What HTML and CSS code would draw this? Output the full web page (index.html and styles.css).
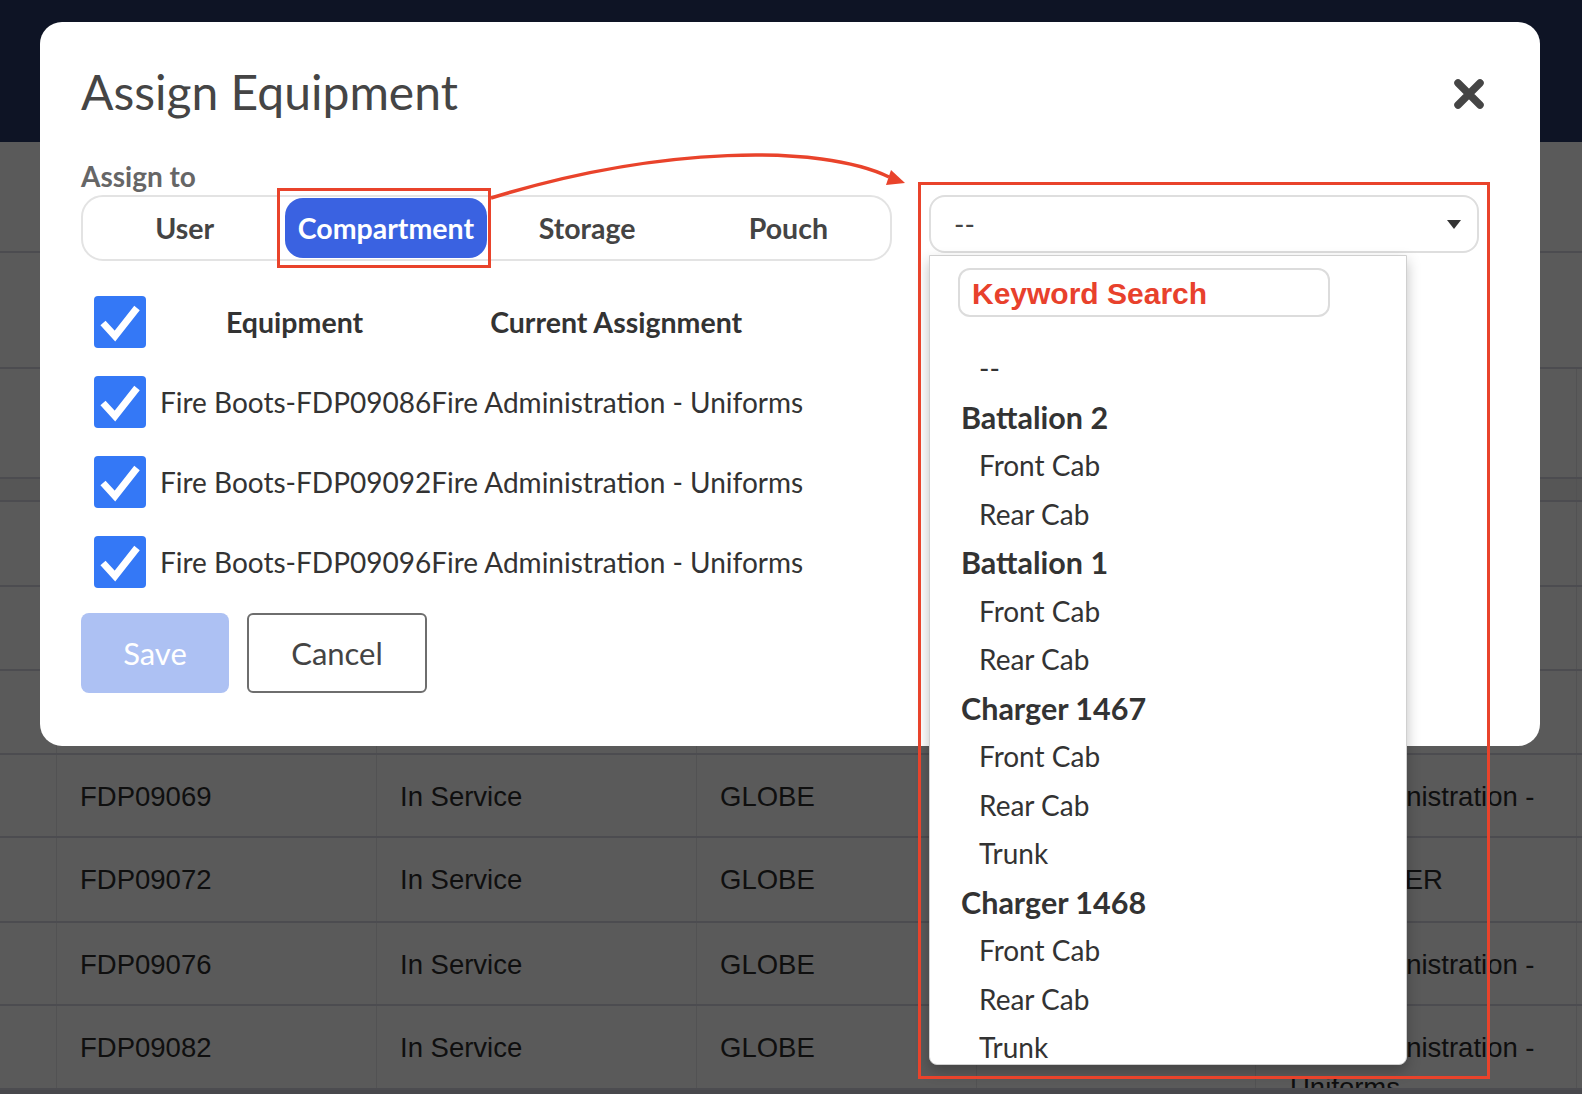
FILE: index.html
```html
<!DOCTYPE html>
<html lang="en">
<head>
<meta charset="utf-8">
<title>Assign Equipment</title>
<link rel="stylesheet" href="styles.css">
</head>
<body>
<div class="page">
  <header class="topbar"></header>
  <div class="band band-a"></div>
  <div class="band band-b"></div>
  <div class="trow h110"><div class="cell"></div><div class="cell"></div><div class="cell"></div><div class="cell"></div><div class="cell"></div><div class="cell"></div><div class="cell"></div></div>
  <div class="trow h23 shade"><div class="cell"></div><div class="cell"></div><div class="cell"></div><div class="cell"></div><div class="cell"></div><div class="cell"></div><div class="cell"></div></div>
  <div class="trow h85"><div class="cell"></div><div class="cell"></div><div class="cell"></div><div class="cell"></div><div class="cell"></div><div class="cell"></div><div class="cell"></div></div>
  <div class="trow h84"><div class="cell"></div><div class="cell"></div><div class="cell"></div><div class="cell"></div><div class="cell"></div><div class="cell"></div><div class="cell"></div></div>
  <div class="trow h84"><div class="cell"></div><div class="cell"></div><div class="cell"></div><div class="cell"></div><div class="cell"></div><div class="cell"></div><div class="cell"></div></div>
  <div class="trow h83"><div class="cell"></div><div class="cell">FDP09069</div><div class="cell">In Service</div><div class="cell">GLOBE</div><div class="cell"></div><div class="cell wide">Fire Administration - Uniforms</div><div class="cell"></div></div>
  <div class="trow h85"><div class="cell"></div><div class="cell">FDP09072</div><div class="cell">In Service</div><div class="cell">GLOBE</div><div class="cell"></div><div class="cell wide caps">CONTAINER</div><div class="cell"></div></div>
  <div class="trow h83"><div class="cell"></div><div class="cell">FDP09076</div><div class="cell">In Service</div><div class="cell">GLOBE</div><div class="cell"></div><div class="cell wide">Fire Administration - Uniforms</div><div class="cell"></div></div>
  <div class="trow h84"><div class="cell"></div><div class="cell">FDP09082</div><div class="cell">In Service</div><div class="cell">GLOBE</div><div class="cell"></div><div class="cell wide">Fire Administration - Uniforms</div><div class="cell"></div></div>
  <footer class="footbar"></footer>
</div>

<div class="modal" role="dialog" aria-label="Assign Equipment">
  <div class="modal-head">
    <h1 class="modal-title">Assign Equipment</h1>
    <button class="close-btn" aria-label="Close">
      <svg width="32" height="32" viewBox="0 0 32 32"><path d="M5 5 L27 27 M27 5 L5 27" stroke="#454545" stroke-width="7.5" stroke-linecap="round" fill="none"/></svg>
    </button>
  </div>
  <div class="modal-body">
    <div class="assign-col">
      <div class="field-label">Assign to</div>
      <div class="seg">
        <div class="seg-item">User</div>
        <div class="seg-item active">Compartment</div>
        <div class="seg-item">Storage</div>
        <div class="seg-item">Pouch</div>
      </div>
      <div class="equip-list">
        <div class="equip-row">
          <span class="cbox"><svg width="52" height="52" viewBox="0 0 52 52"><polyline points="9,27 21,40 43,12" fill="none" stroke="#fff" stroke-width="7"/></svg></span>
          <span class="th th-equip">Equipment</span>
          <span class="th th-assign">Current Assignment</span>
        </div>
        <div class="equip-row">
          <span class="cbox"><svg width="52" height="52" viewBox="0 0 52 52"><polyline points="9,27 21,40 43,12" fill="none" stroke="#fff" stroke-width="7"/></svg></span>
          <span class="equip-text">Fire Boots-FDP09086Fire Administration - Uniforms</span>
        </div>
        <div class="equip-row">
          <span class="cbox"><svg width="52" height="52" viewBox="0 0 52 52"><polyline points="9,27 21,40 43,12" fill="none" stroke="#fff" stroke-width="7"/></svg></span>
          <span class="equip-text">Fire Boots-FDP09092Fire Administration - Uniforms</span>
        </div>
        <div class="equip-row">
          <span class="cbox"><svg width="52" height="52" viewBox="0 0 52 52"><polyline points="9,27 21,40 43,12" fill="none" stroke="#fff" stroke-width="7"/></svg></span>
          <span class="equip-text">Fire Boots-FDP09096Fire Administration - Uniforms</span>
        </div>
      </div>
      <div class="actions">
        <button class="btn btn-save">Save</button>
        <button class="btn btn-cancel">Cancel</button>
      </div>
    </div>
    <div class="target-col">
      <div class="select"><span>--</span><span class="caret"></span></div>
      <div class="dropdown">
        <input class="kw" type="text" placeholder="Keyword Search">
        <ul class="opts">
          <li class="opt">--</li>
          <li class="grp">Battalion 2</li>
          <li class="opt">Front Cab</li>
          <li class="opt">Rear Cab</li>
          <li class="grp">Battalion 1</li>
          <li class="opt">Front Cab</li>
          <li class="opt">Rear Cab</li>
          <li class="grp">Charger 1467</li>
          <li class="opt">Front Cab</li>
          <li class="opt">Rear Cab</li>
          <li class="opt">Trunk</li>
          <li class="grp">Charger 1468</li>
          <li class="opt">Front Cab</li>
          <li class="opt">Rear Cab</li>
          <li class="opt">Trunk</li>
        </ul>
      </div>
    </div>
  </div>
</div>

<div class="anno anno-comp"></div>
<div class="anno anno-drop"></div>
<svg class="anno-arrow" width="1582" height="300" viewBox="0 0 1582 300">
  <path d="M491 198 C 660 146 820 144 889 177" fill="none" stroke="#e9432b" stroke-width="3.5"/>
  <polygon points="905,183 891,170 886,185" fill="#e9432b"/>
</svg>
</body>
</html>
```

FILE: styles.css
```css
* { box-sizing: border-box; }

body {
  margin: 0;
  width: 1582px;
  height: 1094px;
  overflow: hidden;
  position: relative;
  background: #5a5a5a;
  font-family: Lato, "Open Sans", sans-serif;
}

/* ---------- background page (dimmed) ---------- */
.page {
  display: flex;
  flex-direction: column;
  height: 1094px;
}
.topbar {
  height: 142px;
  flex: none;
  background: #0e1425;
}
.band {
  flex: none;
  background: #5a5a5a;
  border-bottom: 2px solid #4c4c50;
}
.band-a { height: 111px; }
.band-b { height: 116px; }

.trow {
  flex: none;
  display: grid;
  grid-template-columns: 57px 320px 320px 280px 279px 321px 1fr;
  border-bottom: 2px solid #4c4c50;
  background: #5a5a5a;
  overflow: hidden;
}
.trow.shade { background: #565656; }
.h110 { height: 110px; }
.h23 { height: 23px; }
.h85 { height: 85px; }
.h84 { height: 84px; }
.h83 { height: 83px; }

.cell {
  border-right: 1px solid #525253;
  padding: 22px 20px 0 23px;
  font-family: "Liberation Sans", Arial, sans-serif;
  font-size: 27.5px;
  line-height: 40px;
  color: #0f0f0f;
}
.cell:first-child { padding-left: 0; }
.cell.wide { padding-left: 34px; padding-right: 8px; }
.cell.wide.caps { padding-left: 27px; }

.footbar {
  flex: 1;
  background: #48484c;
}

/* ---------- modal ---------- */
.modal {
  position: absolute;
  left: 40px;
  top: 22px;
  width: 1500px;
  height: 724px;
  background: #fff;
  border-radius: 22px;
  padding: 41px 55px 0 41px;
}
.modal-head {
  display: flex;
  align-items: center;
  justify-content: space-between;
  height: 58px;
}
.modal-title {
  margin: 0;
  font-size: 48px;
  font-weight: 400;
  line-height: 58px;
  color: #454545;
}
.close-btn {
  border: 0;
  background: none;
  padding: 0;
  width: 32px;
  height: 32px;
  margin-top: 3px;
  display: block;
}
.close-btn svg { display: block; }

.modal-body {
  display: flex;
  gap: 37px;
  margin-top: 39px;
}

.assign-col {
  width: 811px;
  flex: none;
}
.field-label {
  font-size: 28px;
  font-weight: 700;
  line-height: 32px;
  color: #666;
  margin-bottom: 3px;
}
.seg {
  display: grid;
  grid-template-columns: repeat(4, 1fr);
  height: 66px;
  border: 2px solid #e3e3e3;
  border-radius: 22px;
  padding: 1px;
}
.seg-item {
  display: flex;
  align-items: center;
  justify-content: center;
  font-size: 28.5px;
  font-weight: 700;
  color: #444;
  border-radius: 18px;
}
.seg-item.active {
  background: #3a62e1;
  color: #fff;
}

.equip-list {
  margin-top: 35px;
  display: flex;
  flex-direction: column;
  gap: 28px;
}
.equip-row {
  display: flex;
  align-items: center;
  height: 52px;
}
.cbox {
  flex: none;
  width: 52px;
  height: 52px;
  margin-left: 13px;
  background: #3478f6;
  border-radius: 4px;
}
.cbox svg { display: block; }
.th {
  font-size: 28.5px;
  font-weight: 700;
  color: #333;
}
.th-equip { margin-left: 80px; }
.th-assign { margin-left: 127px; }
.equip-text {
  margin-left: 14px;
  font-size: 28px;
  color: #333;
}

.actions {
  margin-top: 25px;
  display: flex;
  gap: 18px;
}
.btn {
  height: 80px;
  font-family: Lato, sans-serif;
  font-size: 31px;
  border-radius: 8px;
  padding: 0;
}
.btn-save {
  width: 148px;
  border: 0;
  background: #adc1f3;
  color: #fff;
}
.btn-cancel {
  width: 180px;
  background: #fff;
  border: 2px solid #6e6e6e;
  border-radius: 6px;
  color: #444;
}

/* ---------- select + dropdown ---------- */
.target-col {
  width: 550px;
  flex: none;
  position: relative;
  padding-top: 35px;
}
.select {
  height: 58px;
  border: 2px solid #dedede;
  border-radius: 16px;
  display: flex;
  align-items: center;
  justify-content: space-between;
  padding: 0 16px 0 23px;
  font-size: 28px;
  color: #444;
}
.caret {
  width: 0;
  height: 0;
  border-left: 7.5px solid transparent;
  border-right: 7.5px solid transparent;
  border-top: 9px solid #333;
}
.dropdown {
  position: absolute;
  top: 95px;
  left: 0;
  width: 478px;
  height: 810px;
  background: #fff;
  border: 1px solid #d0d0d0;
  border-radius: 0 0 8px 8px;
  box-shadow: 0 6px 14px rgba(0, 0, 0, 0.25);
  padding: 12px 0 0 28px;
  overflow: hidden;
}
.kw {
  display: block;
  width: 372px;
  height: 49px;
  border: 2px solid #dcdcdc;
  border-radius: 12px;
  padding: 2px 12px 0;
  font-family: "Liberation Sans", Arial, sans-serif;
  font-weight: 700;
  font-size: 30px;
  color: #333;
  outline: none;
}
.kw::placeholder {
  color: #e8412c;
  opacity: 1;
}
.opts {
  list-style: none;
  margin: 27px 0 0;
  padding: 0;
}
.opts li {
  line-height: 48.5px;
  height: 48.5px;
  color: #333;
}
.grp {
  padding-left: 3px;
  font-size: 30.5px;
  font-weight: 700;
}
.opt {
  padding-left: 21px;
  font-size: 28px;
}

/* ---------- annotations ---------- */
.anno {
  position: absolute;
  border: 3px solid #e9432b;
  pointer-events: none;
}
.anno-comp {
  left: 277px;
  top: 188px;
  width: 214px;
  height: 80px;
}
.anno-drop {
  left: 918px;
  top: 182px;
  width: 572px;
  height: 897px;
}
.anno-arrow {
  position: absolute;
  left: 0;
  top: 0;
  pointer-events: none;
}
```
